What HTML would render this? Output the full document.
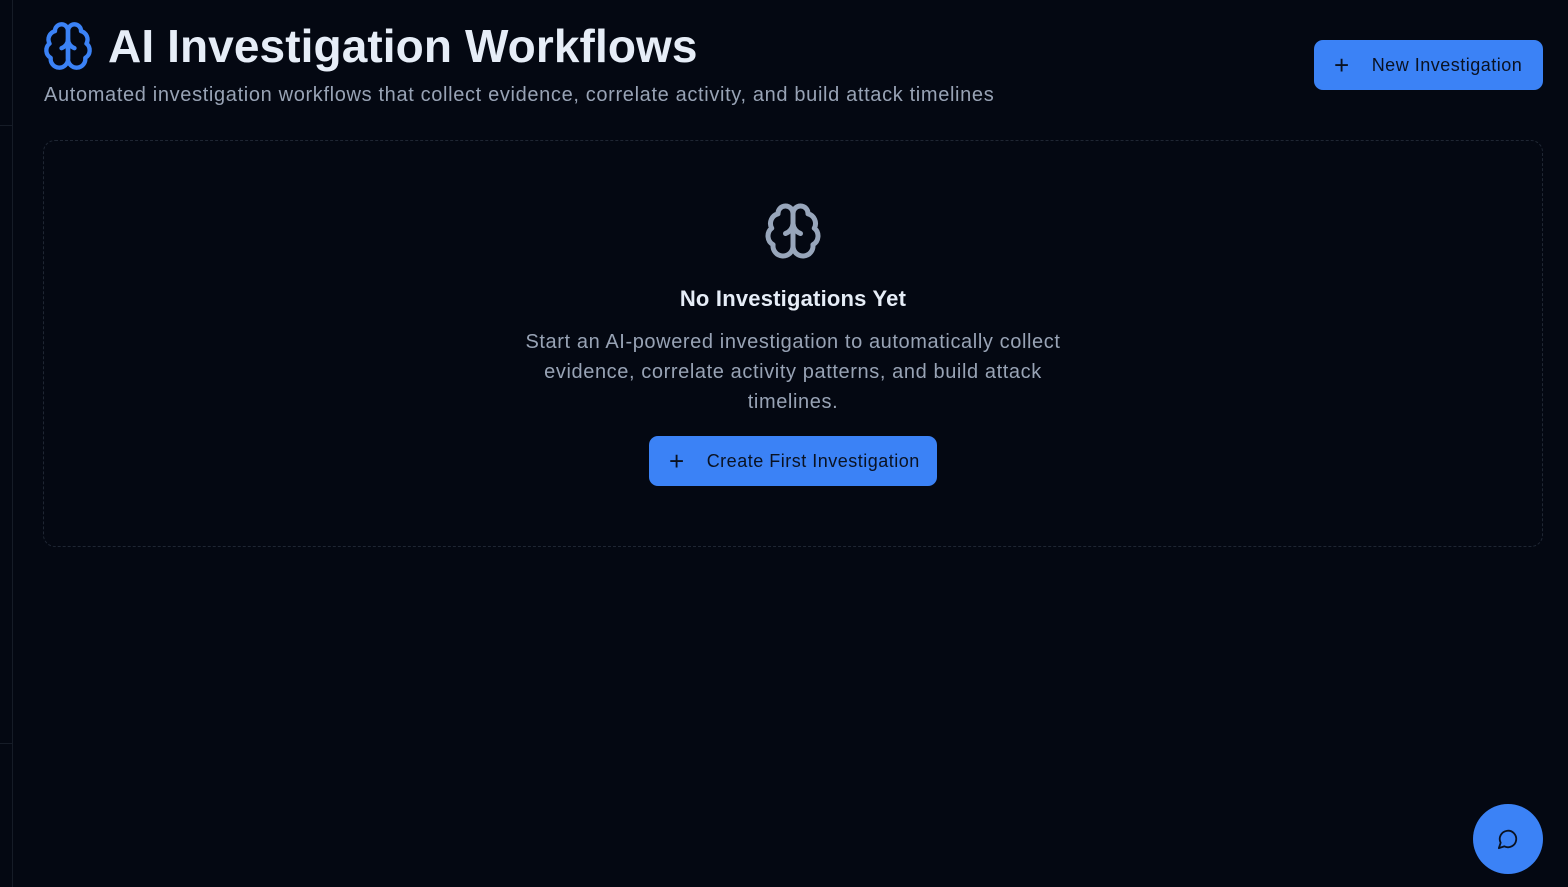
<!DOCTYPE html>
<html><head><meta charset="utf-8"><style>
*{margin:0;padding:0;box-sizing:border-box}
body{width:1568px;height:887px;background:#040812;font-family:"Liberation Sans",sans-serif;position:relative;overflow:hidden;color:#e5eaf2}
.side{position:absolute;left:12px;top:0;bottom:0;border-left:1px solid #161c27}
.hl{position:absolute;left:0;width:12px;border-top:1px solid #161c27}
h1{position:absolute;left:108px;top:19px;font-size:46px;font-weight:700;color:#e6edf7;letter-spacing:0.1px}
.sub{position:absolute;left:44px;top:84px;font-size:20px;color:#98a3b5;letter-spacing:0.65px}
.btn{position:absolute;background:#3b82f6;border-radius:9px;color:#0a1222;font-size:18px;display:flex;align-items:center;letter-spacing:0.5px}
.card{position:absolute;left:43px;top:140px;width:1500px;height:407px;border:1px dashed #1f2633;border-radius:12px}
.t{position:absolute;width:100%;text-align:center}
.fab{position:absolute;left:1473px;top:804px;width:70px;height:70px;border-radius:50%;background:#3b82f6;display:flex;align-items:center;justify-content:center}
</style></head><body>
<div class="side"></div><div class="hl" style="top:125px"></div><div class="hl" style="top:743px"></div>
<svg style="position:absolute;left:42px;top:20px" width="52" height="52" viewBox="0 0 24 24" fill="none" stroke="#3b82f6" stroke-width="2" stroke-linecap="round" stroke-linejoin="round"><path d="M12 5a3 3 0 1 0-5.997.125 4 4 0 0 0-2.526 5.77 4 4 0 0 0 .556 6.588A4 4 0 1 0 12 18Z"/><path d="M12 5a3 3 0 1 1 5.997.125 4 4 0 0 1 2.526 5.77 4 4 0 0 1-.556 6.588A4 4 0 1 1 12 18Z"/><path d="M15 13a4.5 4.5 0 0 1-3-4 4.5 4.5 0 0 1-3 4"/><path d="M12 5v13"/></svg>
<h1>AI Investigation Workflows</h1>
<div class="sub">Automated investigation workflows that collect evidence, correlate activity, and build attack timelines</div>
<div class="btn" style="left:1314px;top:40px;width:229px;height:50px"><span style="margin-left:20px;font-size:26px;font-weight:300">+</span><span style="margin-left:22px">New Investigation</span></div>
<div class="card">
<svg style="position:absolute;left:719px;top:60px" width="60" height="60" viewBox="0 0 24 24" fill="none" stroke="#98a6bb" stroke-width="2" stroke-linecap="round" stroke-linejoin="round"><path d="M12 5a3 3 0 1 0-5.997.125 4 4 0 0 0-2.526 5.77 4 4 0 0 0 .556 6.588A4 4 0 1 0 12 18Z"/><path d="M12 5a3 3 0 1 1 5.997.125 4 4 0 0 1 2.526 5.77 4 4 0 0 1-.556 6.588A4 4 0 1 1 12 18Z"/><path d="M15 13a4.5 4.5 0 0 1-3-4 4.5 4.5 0 0 1-3 4"/><path d="M12 5v13"/></svg>
<div class="t" style="top:145px;font-size:22px;font-weight:700;color:#e6edf7;letter-spacing:0.2px">No Investigations Yet</div>
<div class="t" style="top:186px;font-size:20px;line-height:30px;color:#98a3b5;letter-spacing:0.6px"><div style="width:560px;margin:0 auto">Start an AI-powered investigation to automatically collect evidence, correlate activity patterns, and build attack timelines.</div></div>
<div class="btn" style="left:605px;top:295px;width:288px;height:50px"><span style="margin-left:20px;font-size:26px;font-weight:300">+</span><span style="margin-left:22px">Create First Investigation</span></div>
</div>
<div class="fab"><svg width="22" height="22" viewBox="0 0 24 24" fill="none" stroke="#0a1222" stroke-width="2" stroke-linecap="round" stroke-linejoin="round"><path d="M7.9 20A9 9 0 1 0 4 16.1L2 22Z"/></svg></div>
</body></html>
